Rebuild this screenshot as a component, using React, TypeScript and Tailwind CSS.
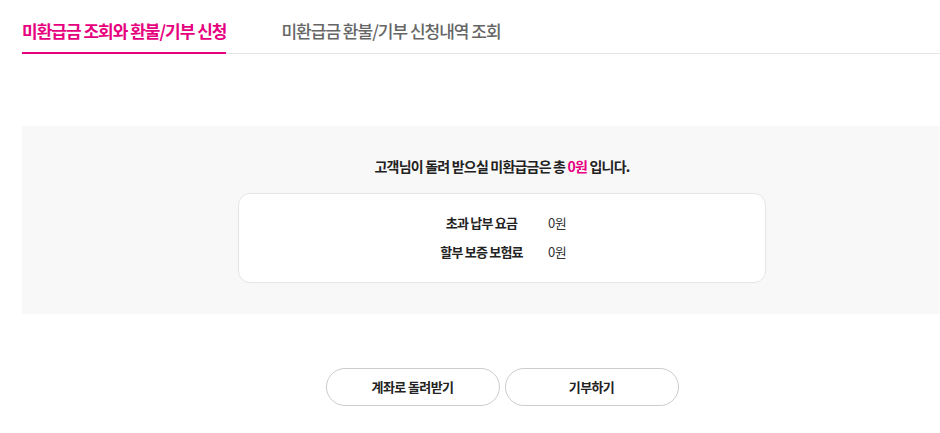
import React from "react";

const rows = [
  { label: "초과 납부 요금", value: "0원" },
  { label: "할부 보증 보험료", value: "0원" },
];

export default function App() {
  return (
    <div className="w-full overflow-hidden bg-white font-['Noto_Sans_CJK_KR','Noto_Sans',sans-serif] text-[#222]">
      <div className="ml-[22px] w-[960px]">
        {/* Tabs */}
        <div className="flex gap-[55px] border-b border-[#e5e5e5]">
          <button className="-mb-px border-b-2 border-[#e6007e] pt-[19px] pb-[9px] text-[17px] leading-[24px] font-bold tracking-[-1px] text-[#e6007e]">
            미환급금 조회와 환불/기부 신청
          </button>
          <button className="-mb-px border-b-2 border-transparent pt-[19px] pb-[9px] text-[17px] leading-[24px] font-medium tracking-[-1px] text-[#666]">
            미환급금 환불/기부 신청내역 조회
          </button>
        </div>

        {/* Summary panel */}
        <div className="mt-[72px] flex flex-col items-center bg-[#f8f8f8] pt-[30px] pb-[31px]">
          <p className="text-[14px] leading-[20px] font-semibold tracking-[-0.8px]">
            고객님이 돌려 받으실 미환급금은 총 <span className="text-[#e6007e]">0원</span> 입니다.
          </p>
          <div className="mt-[17px] flex w-[528px] flex-col gap-[9px] rounded-xl border border-[#e5e5e5] bg-white pt-[19px] pb-[20px] pl-[188px] text-[13px] leading-[20px]">
            {rows.map((r) => (
              <div key={r.label} className="flex">
                <span className="w-[109px] text-center font-bold tracking-[-0.8px]">{r.label}</span>
                <span className="ml-[12px] text-[#333] tracking-[-0.5px]">{r.value}</span>
              </div>
            ))}
          </div>
        </div>

        {/* Actions */}
        <div className="mt-[54px] flex justify-center gap-[5px]">
          <button className="h-[38px] w-[174px] rounded-full border border-[#cccccc] bg-white text-[13px] font-semibold tracking-[-0.6px]">
            계좌로 돌려받기
          </button>
          <button className="h-[38px] w-[174px] rounded-full border border-[#cccccc] bg-white text-[13px] font-semibold tracking-[-0.6px]">
            기부하기
          </button>
        </div>
      </div>
    </div>
  );
}
